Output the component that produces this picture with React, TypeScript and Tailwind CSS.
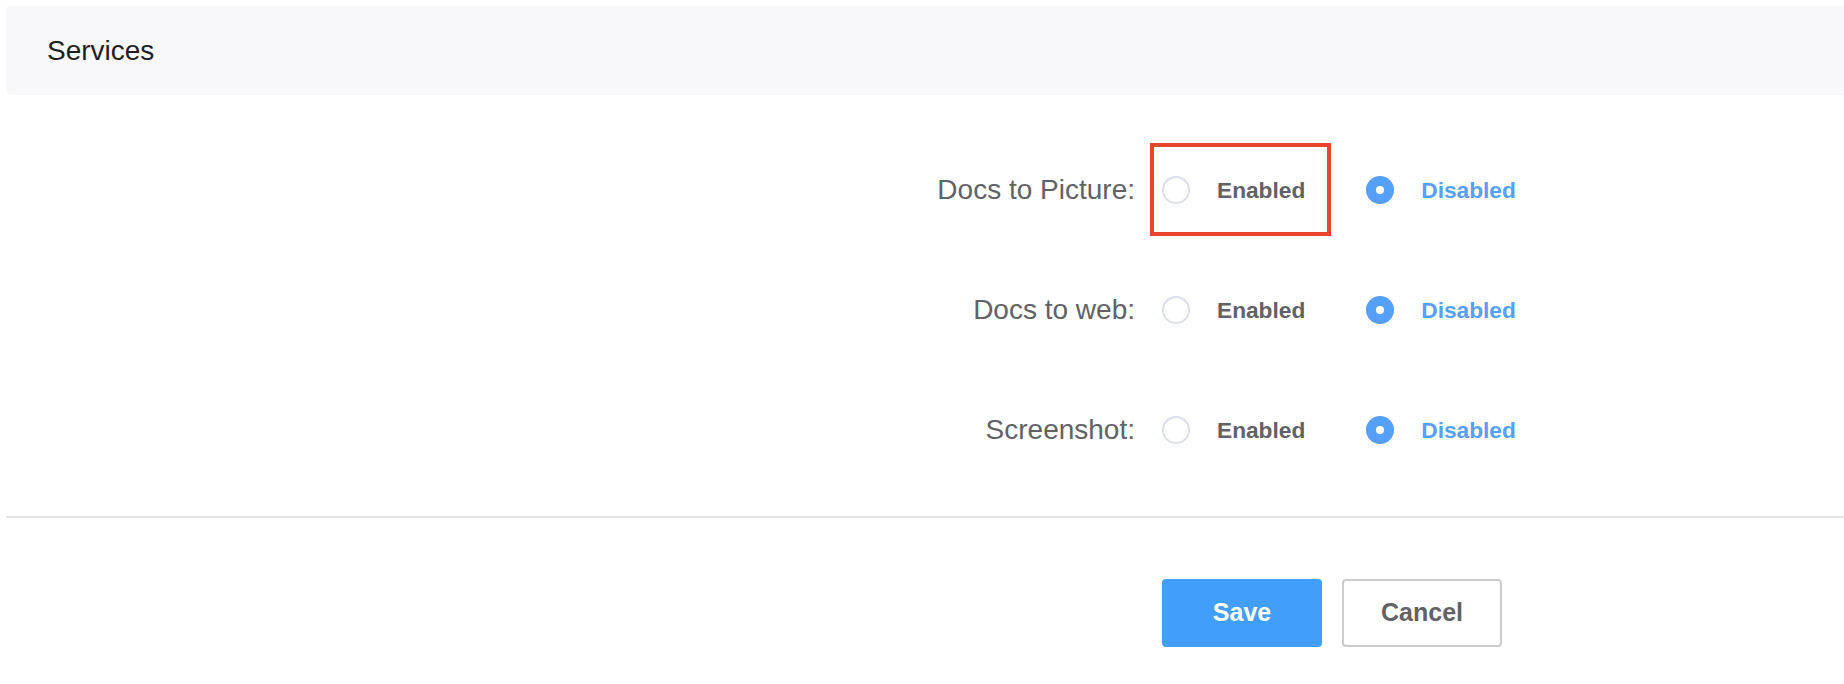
import React, { useState } from 'react';

type Choice = 'enabled' | 'disabled';

const services = [
  { key: 'picture', label: 'Docs to Picture:' },
  { key: 'web', label: 'Docs to web:' },
  { key: 'screenshot', label: 'Screenshot:' },
];

function Radio({ checked, label, onClick }: { checked: boolean; label: string; onClick: () => void }) {
  return (
    <button type="button" onClick={onClick} className="flex items-center gap-[27px] cursor-pointer">
      {checked ? (
        <span className="w-[28px] h-[28px] rounded-full bg-[#55a1f9] flex items-center justify-center">
          <span className="w-[8px] h-[8px] rounded-full bg-white" />
        </span>
      ) : (
        <span className="w-[28px] h-[28px] rounded-full border-2 border-[#dcdfe6] bg-white" />
      )}
      <span className={`text-[22.7px] font-bold ${checked ? 'text-[#55a1f9]' : 'text-[#606266]'}`}>{label}</span>
    </button>
  );
}

export default function App() {
  const [values, setValues] = useState<Record<string, Choice>>({
    picture: 'disabled',
    web: 'disabled',
    screenshot: 'disabled',
  });

  return (
    <div className="w-[1844px] h-[684px] bg-white pl-[6px] pt-[6px] overflow-hidden font-['Liberation_Sans',Arial,sans-serif]">
      <div className="h-[89px] bg-[#f8f8fa] rounded-l-[4px] flex items-center pl-[41px]">
        <span className="text-[28px] text-[#1f1f1f]">Services</span>
      </div>

      <div className="pt-[35px]">
        {services.map((s, i) => (
          <div key={s.key} className="h-[120px] flex items-center">
            <div className="w-[1129px] text-right text-[28px] text-[#606266]">{s.label}</div>
            <div className="ml-[27px] flex items-center gap-[61px]">
              <div className="relative">
                {/* annotation box round the first option */}
                {i === 0 && (
                  <div className="absolute left-[-12px] top-[-30px] w-[181px] h-[93px] border-[4px] border-[#e8432b] pointer-events-none" />
                )}
                <Radio
                  checked={values[s.key] === 'enabled'}
                  label="Enabled"
                  onClick={() => setValues({ ...values, [s.key]: 'enabled' })}
                />
              </div>
              <Radio
                checked={values[s.key] === 'disabled'}
                label="Disabled"
                onClick={() => setValues({ ...values, [s.key]: 'disabled' })}
              />
            </div>
          </div>
        ))}
      </div>

      <div className="mt-[26px] h-[2px] bg-[#e4e4e4]" />

      <div className="pt-[61px] pl-[1156px] flex gap-[20px]">
        <button className="w-[160px] h-[68px] rounded-[4px] bg-[#419ffb] text-white text-[25px] font-bold">
          Save
        </button>
        <button className="w-[160px] h-[68px] rounded-[4px] border-2 border-[#cccccc] bg-white text-[#606266] text-[25px] font-bold">
          Cancel
        </button>
      </div>
    </div>
  );
}
